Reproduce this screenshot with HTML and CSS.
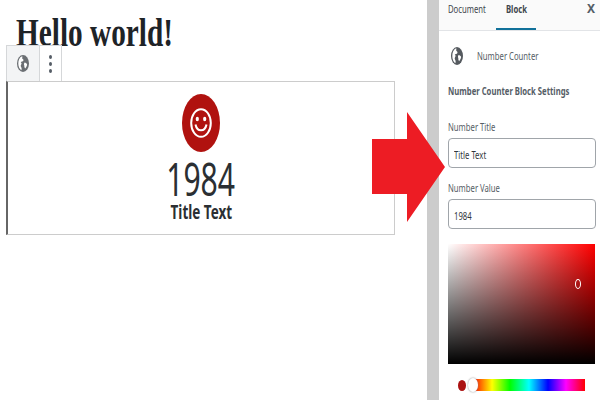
FILE: index.html
```html
<!doctype html>
<html>
  <head>
    <meta charset="utf-8" />
    <link rel="stylesheet" href="styles.css">
  </head>
  <body>
    <div class="editor">
      <div class="content">
        <h1 class="post-title"><span>Hello world!</span></h1>
        <div class="block-toolbar">
          <div class="tool-btn tool-icon">
            <svg class="globe" width="12" height="17" viewBox="0 0 12 17">
              <ellipse cx="6" cy="8.500" rx="6" ry="8.500" fill="#6b6f73"/>
              <path d="M4.500 1.500C2.500 2.600 1.300 5.400 1.300 8.500c0 2.900 1.100 5.500 3 6.800.6-1 .4-2.200-.2-3.200-.6-1-.4-2 .2-2.800.5-.7.200-1.500-.6-2.100.8-.6 2-.7 2.600-1.400.5-.7 0-1.300-.6-1.700-.6-.4-.6-1.200-.2-2.600z" fill="#fff"/>
              <path d="M7.600 7.500c1.200.2 2.300.9 2.500 2-.2 1.600-1 3-2 4-.7-.9-1-1.900-.8-3-.5-1-.4-2.100.3-3z" fill="#fff"/>
            </svg>
          </div>
          <div class="tool-btn tool-more">
            <i></i><i></i><i></i>
          </div>
        </div>
        <div class="counter-block">
          <div class="counter-icon">
            <svg width="22" height="30" viewBox="0 0 22 30" fill="none" stroke="#fff">
              <ellipse cx="11" cy="15" rx="9.800" ry="13.800" stroke-width="2"/>
              <ellipse cx="7.300" cy="11" rx="1.600" ry="2.200" fill="#fff" stroke="none"/>
              <ellipse cx="14.700" cy="11" rx="1.600" ry="2.200" fill="#fff" stroke="none"/>
              <path d="M5.500 16.500c.8 4 3 5.800 5.500 5.800s4.700-1.800 5.500-5.800" stroke-width="2"/>
            </svg>
          </div>
          <div class="counter-value"><span>1984</span></div>
          <div class="counter-title"><span>Title Text</span></div>
        </div>
      </div>
      <div class="gutter"></div>
      <div class="sidebar">
        <div class="tabs">
          <div class="tab"><span>Document</span></div>
          <div class="tab tab-active"><span>Block</span></div>
          <div class="tab-close">X</div>
        </div>
        <div class="block-card">
          <svg class="globe" width="12" height="18" viewBox="0 0 12 17" preserveAspectRatio="none">
            <ellipse cx="6" cy="8.500" rx="6" ry="8.500" fill="#555a5f"/>
            <path d="M4.500 1.500C2.500 2.600 1.300 5.400 1.300 8.500c0 2.900 1.100 5.500 3 6.800.6-1 .4-2.200-.2-3.200-.6-1-.4-2 .2-2.800.5-.7.200-1.500-.6-2.100.8-.6 2-.7 2.600-1.400.5-.7 0-1.300-.6-1.700-.6-.4-.6-1.200-.2-2.600z" fill="#fff"/>
            <path d="M7.600 7.500c1.200.2 2.300.9 2.500 2-.2 1.600-1 3-2 4-.7-.9-1-1.900-.8-3-.5-1-.4-2.100.3-3z" fill="#fff"/>
          </svg>
          <span class="narrow">Number Counter</span>
        </div>
        <div class="settings-title"><span class="narrow">Number Counter Block Settings</span></div>
        <div class="field-label"><span class="narrow">Number Title</span></div>
        <div class="field-input"><span class="narrow">Title Text</span></div>
        <div class="field-label"><span class="narrow">Number Value</span></div>
        <div class="field-input"><span class="narrow">1984</span></div>
        <div class="color-box">
          <div class="color-pin"></div>
        </div>
        <div class="hue-row">
          <div class="hue-swatch"></div>
          <div class="hue-bar">
            <div class="hue-thumb"></div>
          </div>
        </div>
      </div>
    </div>

    <!-- arrow sits over the gutter -->
    <svg class="big-arrow" width="74" height="110" viewBox="0 0 74 110">
      <polygon points="0,27 35,27 35,0 73,55 35,110 35,82 0,82" fill="#ed1c24"/>
    </svg>
  </body>
</html>
```

FILE: styles.css
```css
html,
body {
  margin: 0;
  height: 100%;
  overflow: hidden;
}
body {
  position: relative;
  width: 600px;
  height: 400px;
  background: white;
  font-family: "Noto Sans", sans-serif;
  color: #32373c;
}
.editor {
  display: flex;
  height: 400px;
}
.content {
  width: 427px;
  box-sizing: border-box;
  padding-left: 6px;
}
.post-title {
  margin: 0;
  height: 45px;
  box-sizing: border-box;
  padding: 10px 0 0 10px;
  font-family: "Liberation Serif", serif;
  font-size: 41px;
  line-height: 45px;
  font-weight: bold;
  color: #1e2327;
}
.post-title span {
  display: inline-block;
  transform: scaleX(0.714);
  transform-origin: left center;
  white-space: nowrap;
}
.block-toolbar {
  display: flex;
  width: 56px;
  height: 36px;
  box-sizing: border-box;
  border: 1px solid #d5d7d9;
  border-bottom: none;
  position: relative;
}
.tool-btn {
  display: flex;
  align-items: center;
  justify-content: center;
}
.tool-icon {
  width: 32px;
  background: #f3f4f5;
  border-right: 1px solid #d5d7d9;
}
.tool-more {
  flex: 1;
  flex-direction: column;
  gap: 3px;
}
.tool-more i {
  width: 3px;
  height: 4px;
  border-radius: 50%;
  background: #555d66;
}
.counter-block {
  width: 389px;
  height: 154px;
  box-sizing: border-box;
  border: 1px solid #ccc;
  border-left: 2px solid #666;
  display: flex;
  flex-direction: column;
  align-items: center;
  padding-top: 12px;
}
.counter-icon {
  width: 38px;
  height: 58px;
  border-radius: 50%;
  background: #b0120f;
  display: flex;
  align-items: center;
  justify-content: center;
}
.counter-value {
  font-size: 46px;
  line-height: 50px;
  margin-top: 1px;
  color: #2b2f33;
}
.counter-value span {
  display: inline-block;
  transform: scaleX(0.655);
}
.counter-title {
  font-size: 19px;
  line-height: 20px;
  margin-top: -1px;
  font-weight: bold;
  color: #2b2f33;
}
.counter-title span {
  display: inline-block;
  transform: scaleX(0.71);
  white-space: nowrap;
}
.gutter {
  width: 12px;
  background: #cccccc;
}
.sidebar {
  width: 161px;
  box-sizing: border-box;
  font-size: 11px;
  color: #555d66;
}
.narrow {
  display: inline-block;
  transform: scaleX(0.7);
  transform-origin: left center;
  white-space: nowrap;
}
.tabs {
  display: flex;
  height: 31px;
  box-sizing: border-box;
  border-bottom: 1px solid #e2e4e7;
  background: #fafafa;
  position: relative;
}
.tab {
  height: 30px;
  box-sizing: border-box;
  padding: 0 10px;
  line-height: 17px;
  color: #40464d;
}
.tab:first-child {
  padding-left: 9px;
  width: 57px;
}
.tab span {
  display: inline-block;
  transform: scaleX(0.7);
  transform-origin: left center;
}
.tab-active {
  width: 40px;
  font-weight: bold;
  border-bottom: 2px solid #11719a;
}
.tab-close {
  position: absolute;
  right: 5px;
  top: 1px;
  font-size: 12px;
  line-height: 16px;
  font-weight: bold;
}
.block-card {
  display: flex;
  align-items: center;
  gap: 14px;
  height: 49px;
  padding-left: 12px;
}
.settings-title {
  padding-left: 9px;
  height: 26px;
  margin-bottom: 14px;
  font-weight: bold;
  line-height: 22px;
}
.field-label {
  padding-left: 9px;
  line-height: 14px;
  height: 18px;
}
.field-input {
  margin-left: 9px;
  margin-right: 4px;
  height: 30px;
  box-sizing: border-box;
  border: 1px solid #a0a5aa;
  border-radius: 4px;
  padding-left: 5px;
  line-height: 31px;
  color: #32373c;
  background: white;
  margin-bottom: 13px;
}
.color-box {
  position: relative;
  margin: 15px 2px 0 9px;
  width: 147px;
  height: 120px;
  background:
    linear-gradient(to bottom, rgba(0,0,0,0), #000),
    linear-gradient(to right, #fff, #f00);
}
.color-pin {
  position: absolute;
  left: 127px;
  top: 35px;
  width: 4px;
  height: 8px;
  border: 1px solid white;
  border-radius: 50%;
}
.hue-row {
  display: flex;
  align-items: center;
  margin-top: 15px;
  padding-left: 19px;
  gap: 7px;
}
.hue-swatch {
  width: 8px;
  height: 11px;
  border-radius: 50%;
  background: #ab1212;
}
.hue-bar {
  position: relative;
  width: 112px;
  height: 12px;
  background: linear-gradient(to right, #f00, #ff0 17%, #0f0 33%, #0ff 50%, #00f 67%, #f0f 83%, #f00);
}
.hue-thumb {
  position: absolute;
  left: -5px;
  top: -1px;
  width: 10px;
  height: 14px;
  border-radius: 50%;
  background: white;
  box-shadow: 0 0 2px #888;
}
.big-arrow {
  position: absolute;
  left: 372px;
  top: 112px;
}
```
